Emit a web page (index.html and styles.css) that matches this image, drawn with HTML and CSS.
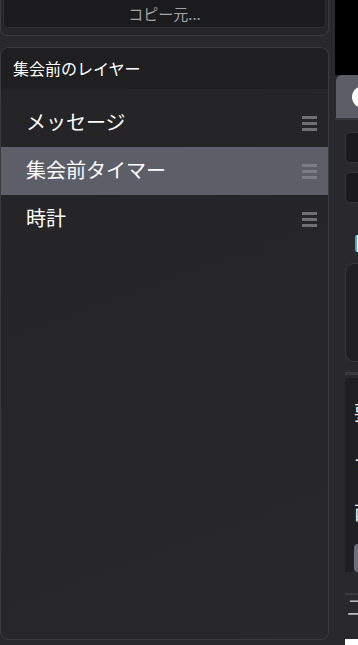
FILE: index.html
```html
<!DOCTYPE html>
<html lang="ja">
<head>
<meta charset="utf-8">
<link rel="stylesheet" href="styles.css">
</head>
<body>
<div class="app">
  <div class="left">
    <div class="top-panel">
      <div class="copy-btn">コピー元...</div>
    </div>
    <div class="layer-panel">
      <div class="layer-header">集会前のレイヤー</div>
      <div class="layer-list">
        <div class="layer-row"><span class="layer-name">メッセージ</span><span class="handle"><i></i><i></i><i></i></span></div>
        <div class="layer-row selected"><span class="layer-name">集会前タイマー</span><span class="handle"><i></i><i></i><i></i></span></div>
        <div class="layer-row"><span class="layer-name">時計</span><span class="handle"><i></i><i></i><i></i></span></div>
      </div>
    </div>
  </div>
  <div class="right">
    <div class="preview"></div>
    <div class="play-btn"><span class="circle"></span></div>
    <div class="props">
      <div class="input"></div>
      <div class="input second"></div>
      <div class="check-row"><span class="check"></span></div>
      <div class="textbox"></div>
      <div class="sep"></div>
      <div class="dark-area">
        <div class="frag f1">要素</div>
        <div class="frag f2">ナ</div>
        <div class="frag f3">酉</div>
        <div class="gray-btn"></div>
      </div>
      <div class="sep sep2"></div>
      <div class="frag f4">二</div>
      <div class="white-bit"></div>
    </div>
  </div>
</div>
</body>
</html>
```

FILE: styles.css
```css
html, body {
  margin: 0;
  padding: 0;
  height: 100%;
  overflow: hidden;
}
body {
  background: #29292c;
  font-family: "Noto Sans CJK JP", "Noto Sans", sans-serif;
  color: #fff;
}
.app {
  display: flex;
  height: 645px;
  width: 420px;
}
.left {
  width: 329px;
  flex: none;
  display: flex;
  flex-direction: column;
}
.top-panel {
  height: 28px;
  padding: 0 2px 7px 2px;
  border: 1px solid #3b3b3f;
  border-top: none;
  border-radius: 0 0 7px 7px;
  background: #262629;
  box-sizing: content-box;
  width: 323px;
}
.copy-btn {
  height: 28px;
  box-sizing: border-box;
  background: #1b1b1d;
  border: 1px solid #303033;
  border-top: none;
  border-radius: 0 0 5px 5px;
  color: #a4a4a8;
  font-size: 15px;
  line-height: 27px;
  text-align: center;
  padding-left: 0;
}
.layer-panel {
  margin-top: 11px;
  height: 593px;
  box-sizing: border-box;
  border: 1px solid #3b3b3f;
  border-radius: 8px;
  background: linear-gradient(160deg, #242427 0%, #28282b 100%);
  overflow: hidden;
}
.layer-header {
  height: 41px;
  background: #1f1f21;
  font-size: 16px;
  line-height: 40px;
  padding-left: 12px;
  border-radius: 7px 7px 0 0;
}
.layer-list {
  padding-top: 10px;
}
.layer-row {
  height: 48px;
  display: flex;
  align-items: center;
  justify-content: space-between;
  padding: 0 11px 0 25px;
}
.layer-row.selected {
  background: #5c5e68;
}
.layer-name {
  font-size: 20px;
  line-height: 48px;
  margin-top: -2px;
}
.handle {
  display: flex;
  flex-direction: column;
  gap: 3px;
  width: 15px;
}
.handle i {
  display: block;
  height: 3px;
  background: #707074;
}
.selected .handle i {
  background: #7b7e87;
}
.right {
  margin-left: 6px;
  width: 90px;
  flex: none;
  display: flex;
  flex-direction: column;
}
.preview {
  height: 78px;
  background: #000;
}
.play-btn {
  height: 44px;
  margin-left: 1px;
  background: #5b5d67;
  border-radius: 6px 0 0 0;
  display: flex;
  align-items: center;
  padding-left: 16px;
  box-sizing: border-box;
}
.circle {
  width: 22px;
  height: 22px;
  border-radius: 50%;
  background: #fff;
}
.props {
  display: flex;
  flex-direction: column;
  padding-left: 10px;
  border-top: 2px solid #38383c;
}
.input {
  margin-top: 12px;
  height: 31px;
  background: #1a1a1c;
  border: 1px solid #333336;
  border-radius: 5px;
  box-sizing: border-box;
}
.input.second {
  margin-top: 9px;
}
.check-row {
  height: 60px;
  display: flex;
  align-items: flex-start;
  padding-left: 10px;
  padding-top: 32px;
  box-sizing: border-box;
}
.check {
  width: 16px;
  height: 17px;
  background: #fff;
  border-left: 2px solid #5a9ee8;
  border-radius: 2px;
}
.textbox {
  height: 99px;
  background: #202022;
  border: 1px solid #38383c;
  border-radius: 9px;
  box-sizing: border-box;
}
.sep {
  margin-top: 10px;
  height: 3px;
  background: #3a3a3d;
}
.dark-area {
  margin-top: 3px;
  height: 194px;
  background: #1f1f21;
  display: flex;
  flex-direction: column;
  padding-left: 9px;
}
.frag {
  font-size: 19px;
  line-height: 24px;
  color: #fff;
  white-space: nowrap;
}
.f1 { margin-top: 22px; }
.f2 { margin-top: 26px; }
.f3 { margin-top: 26px; }
.gray-btn {
  margin-top: 20px;
  height: 30px;
  background: #6b6e78;
  border-radius: 4px;
  width: 60px;
}
.sep2 {
  margin-top: 21px;
  height: 2px;
}
.f4 {
  font-size: 20px;
  line-height: 24px;
  color: #b8b8bc;
  margin-top: 0;
  padding-left: 2px;
}
.white-bit {
  margin-top: 20px;
  height: 6px;
  background: #fff;
}
```
